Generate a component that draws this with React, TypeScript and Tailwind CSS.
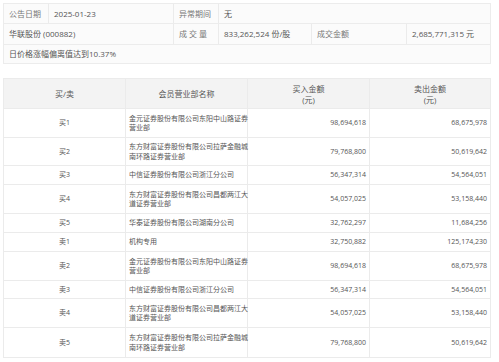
const FONT = "font-['Open_Sans','Noto_Sans_CJK_SC',sans-serif]"

type Row = { side: string; name: string[]; buy: string; sell: string; h: string }

const rows: Row[] = [
  { side: '买1', name: ['金元证券股份有限公司东阳中山路证券', '营业部'], buy: '98,694,618', sell: '68,675,978', h: 'h-[29px]' },
  { side: '买2', name: ['东方财富证券股份有限公司拉萨金融城', '南环路证券营业部'], buy: '79,768,800', sell: '50,619,642', h: 'h-[28px]' },
  { side: '买3', name: ['中信证券股份有限公司浙江分公司'], buy: '56,347,314', sell: '54,564,051', h: 'h-[19px]' },
  { side: '买4', name: ['东方财富证券股份有限公司昌都两江大', '道证券营业部'], buy: '54,057,025', sell: '53,158,440', h: 'h-[29px]' },
  { side: '买5', name: ['华泰证券股份有限公司湖南分公司'], buy: '32,762,297', sell: '11,684,256', h: 'h-[19px]' },
  { side: '卖1', name: ['机构专用'], buy: '32,750,882', sell: '125,174,230', h: 'h-[19px]' },
  { side: '卖2', name: ['金元证券股份有限公司东阳中山路证券', '营业部'], buy: '98,694,618', sell: '68,675,978', h: 'h-[29px]' },
  { side: '卖3', name: ['中信证券股份有限公司浙江分公司'], buy: '56,347,314', sell: '54,564,051', h: 'h-[18px]' },
  { side: '卖4', name: ['东方财富证券股份有限公司昌都两江大', '道证券营业部'], buy: '54,057,025', sell: '53,158,440', h: 'h-[29px]' },
  { side: '卖5', name: ['东方财富证券股份有限公司拉萨金融城', '南环路证券营业部'], buy: '79,768,800', sell: '50,619,642', h: 'h-[29px]' },
]

function InfoCell({ w, children, last = false, label = false }: { w: string; children: React.ReactNode; last?: boolean; label?: boolean }) {
  return (
    <div className={`${w} ${last ? 'flex-1' : 'border-r border-[#ebebeb]'} flex items-center pl-[5px] ${label ? 'text-[#777]' : 'text-[#555]'}`}>
      {children}
    </div>
  )
}

export default function App() {
  return (
    <div className={`w-[499px] h-[362px] bg-white pt-[3px] px-[3px] ${FONT}`}>
      {/* Summary */}
      <div className="w-[488px] border border-[#ececec] bg-[#fbfbfb] text-[8px] leading-none">
        <div className="flex h-[20px] border-b border-[#ececec]">
          <InfoCell w="w-[45px]" label>公告日期</InfoCell>
          <InfoCell w="w-[125px]">2025-01-23</InfoCell>
          <InfoCell w="w-[45px]" label>异常期间</InfoCell>
          <InfoCell w="" last>无</InfoCell>
        </div>
        <div className="flex h-[21px] border-b border-[#ececec]">
          <InfoCell w="w-[170px]">华联股份 (000882)</InfoCell>
          <InfoCell w="w-[45px]" label><span className="tracking-[2px]">成交量</span></InfoCell>
          <InfoCell w="w-[93px]">833,262,524 份/股</InfoCell>
          <InfoCell w="w-[95px]" label>成交金额</InfoCell>
          <InfoCell w="" last>2,685,771,315 元</InfoCell>
        </div>
        <div className="flex h-[18px]">
          <InfoCell w="" last>日价格涨幅偏离值达到10.37%</InfoCell>
        </div>
      </div>

      {/* Detail table */}
      <div className="mt-[14px] w-[488px] border border-[#ebebeb] text-[#555]">
        <div className="flex h-[30px] bg-[#f3f3f3] text-[8px] leading-[11px] text-center border-b border-[#ebebeb]">
          <div className="w-[122px] border-r border-[#ebebeb] flex items-center justify-center">买/卖</div>
          <div className="w-[122px] border-r border-[#ebebeb] flex items-center justify-center">会员营业部名称</div>
          <div className="w-[122px] border-r border-[#ebebeb] flex items-center justify-center">买入金额<br />(元)</div>
          <div className="flex-1 flex items-center justify-center">卖出金额<br />(元)</div>
        </div>
        {rows.map((r, i) => (
          <div key={i} className={`flex ${r.h} text-[7px] leading-[9.5px] ${i < rows.length - 1 ? 'border-b border-[#ebebeb]' : ''}`}>
            <div className="w-[122px] border-r border-[#ebebeb] flex items-center justify-center">{r.side}</div>
            <div className="w-[122px] border-r border-[#ebebeb] flex flex-col justify-center pl-[3px] whitespace-nowrap">
              {r.name.map((n, j) => (
                <div key={j}>{n}</div>
              ))}
            </div>
            <div className="w-[122px] border-r border-[#ebebeb] flex items-center justify-end pr-[3px]">{r.buy}</div>
            <div className="flex-1 flex items-center justify-end pr-[3px]">{r.sell}</div>
          </div>
        ))}
      </div>
    </div>
  )
}
